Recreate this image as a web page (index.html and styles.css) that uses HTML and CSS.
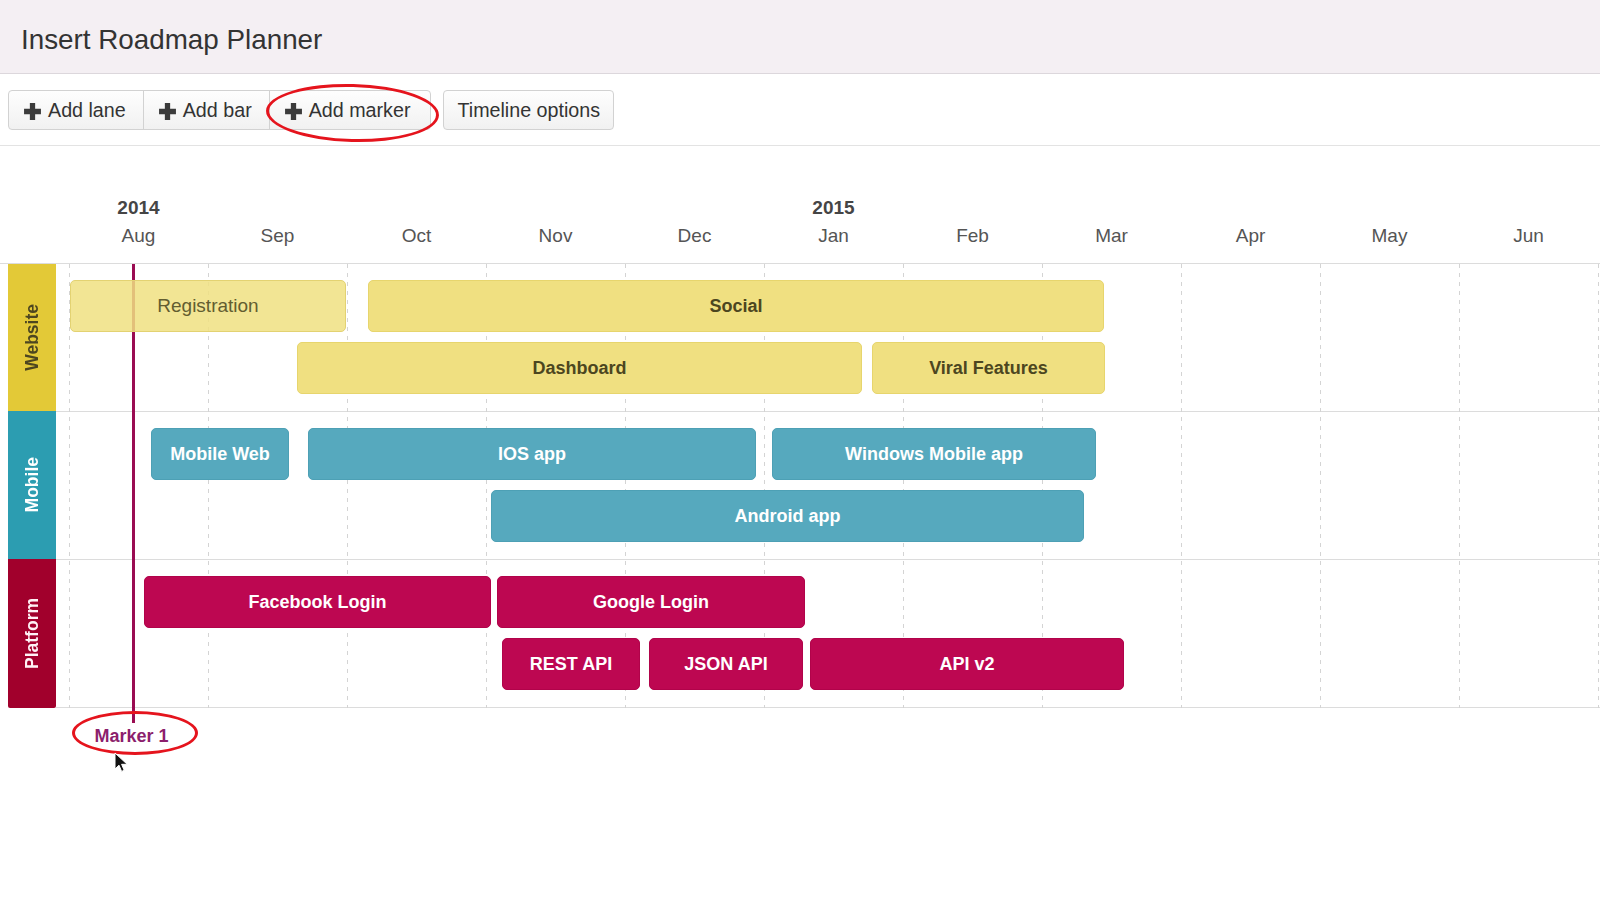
FILE: index.html
```html
<!DOCTYPE html>
<html lang="en">
<head>
<meta charset="utf-8">
<title>Insert Roadmap Planner</title>
<link rel="stylesheet" href="styles.css">
</head>
<body>
<header class="app-header">
  <h1 class="title">Insert Roadmap Planner</h1>
</header>

<div class="toolbar">
  <div class="btn-group">
    <button class="btn"><svg class="plus" viewBox="0 0 18 18"><path d="M6.5 1h5v5.5H17v5h-5.5V17h-5v-5.5H1v-5h5.5z"/></svg>Add lane</button>
    <button class="btn"><svg class="plus" viewBox="0 0 18 18"><path d="M6.5 1h5v5.5H17v5h-5.5V17h-5v-5.5H1v-5h5.5z"/></svg>Add bar</button>
    <button class="btn"><svg class="plus" viewBox="0 0 18 18"><path d="M6.5 1h5v5.5H17v5h-5.5V17h-5v-5.5H1v-5h5.5z"/></svg>Add marker</button>
  </div>
  <button class="btn btn-single">Timeline options</button>
  <span class="annot annot-button"></span>
</div>

<section class="timeline">
  <div class="scale">
    <div class="col"><div class="year">2014</div><div class="month">Aug</div></div>
    <div class="col"><div class="year"></div><div class="month">Sep</div></div>
    <div class="col"><div class="year"></div><div class="month">Oct</div></div>
    <div class="col"><div class="year"></div><div class="month">Nov</div></div>
    <div class="col"><div class="year"></div><div class="month">Dec</div></div>
    <div class="col"><div class="year">2015</div><div class="month">Jan</div></div>
    <div class="col"><div class="year"></div><div class="month">Feb</div></div>
    <div class="col"><div class="year"></div><div class="month">Mar</div></div>
    <div class="col"><div class="year"></div><div class="month">Apr</div></div>
    <div class="col"><div class="year"></div><div class="month">May</div></div>
    <div class="col"><div class="year"></div><div class="month">Jun</div></div>
  </div>

  <div class="lanes">
    <div class="gridlines"></div>

    <div class="marker">
      <div class="marker-label">Marker 1</div>
      <span class="annot annot-marker"></span>
      <svg class="cursor" viewBox="0 0 14 21"><path d="M1 1v16l4-3.8 2.6 6.2 2.6-1.1-2.6-6h5.6z"/></svg>
    </div>

    <div class="lane">
      <div class="lane-label lane-label-website"><span>Website</span></div>
      <div class="lane-body">
        <div class="bar-row">
          <div class="bar bar-yellow bar-faded" style="left:14px;width:276px">Registration</div>
          <div class="bar bar-yellow" style="left:312px;width:736px">Social</div>
        </div>
        <div class="bar-row">
          <div class="bar bar-yellow" style="left:241px;width:565px">Dashboard</div>
          <div class="bar bar-yellow" style="left:816px;width:233px">Viral Features</div>
        </div>
      </div>
    </div>

    <div class="lane">
      <div class="lane-label lane-label-mobile"><span>Mobile</span></div>
      <div class="lane-body">
        <div class="bar-row">
          <div class="bar bar-teal" style="left:95px;width:138px">Mobile Web</div>
          <div class="bar bar-teal" style="left:252px;width:448px">IOS app</div>
          <div class="bar bar-teal" style="left:716px;width:324px">Windows Mobile app</div>
        </div>
        <div class="bar-row">
          <div class="bar bar-teal" style="left:435px;width:593px">Android app</div>
        </div>
      </div>
    </div>

    <div class="lane">
      <div class="lane-label lane-label-platform"><span>Platform</span></div>
      <div class="lane-body">
        <div class="bar-row">
          <div class="bar bar-crimson" style="left:88px;width:347px">Facebook Login</div>
          <div class="bar bar-crimson" style="left:441px;width:308px">Google Login</div>
        </div>
        <div class="bar-row">
          <div class="bar bar-crimson" style="left:446px;width:138px">REST API</div>
          <div class="bar bar-crimson" style="left:593px;width:154px">JSON API</div>
          <div class="bar bar-crimson" style="left:754px;width:314px">API v2</div>
        </div>
      </div>
    </div>
  </div>
</section>
</body>
</html>
```

FILE: styles.css
```css
* {
  box-sizing: border-box;
}

html, body {
  margin: 0;
  padding: 0;
  background: #ffffff;
}

body {
  width: 1600px;
  height: 900px;
  overflow: hidden;
  font-family: "Liberation Sans", Arial, Helvetica, sans-serif;
  color: #333333;
}

/* Header */
.app-header {
  height: 74px;
  padding: 25px 20px 0 21px;
  background: #f4eff3;
  border-bottom: 1px solid #dcd7dc;
}

.title {
  margin: 0;
  font-size: 27.8px;
  line-height: 30px;
  font-weight: normal;
  color: #333333;
}

/* Toolbar */
.toolbar {
  position: relative;
  display: flex;
  align-items: center;
  height: 72px;
  padding: 16px 0 15px 8px;
  border-bottom: 1px solid #e3e3e3;
}

.btn-group {
  display: flex;
}

.btn {
  display: flex;
  align-items: center;
  height: 40px;
  padding: 0 17px 0 14px;
  font-family: inherit;
  font-size: 19.7px;
  color: #333333;
  background: linear-gradient(#fefefe, #f1f1f1);
  border: 1px solid #d2d2d2;
  border-radius: 0;
  cursor: pointer;
}

.btn-group .btn + .btn {
  margin-left: -1px;
}

.btn-group .btn:first-child {
  border-radius: 4px 0 0 4px;
}

.btn-group .btn:last-child {
  border-radius: 0 4px 4px 0;
  padding-right: 20px;
}

.btn-single {
  margin-left: 12px;
  padding: 0 13px;
  border-radius: 4px;
}

.plus {
  width: 19px;
  height: 19px;
  margin-right: 6px;
  margin-top: 3px;
  fill: #3b3b3b;
}

/* Annotations */
.annot {
  position: absolute;
  border: 3px solid #e5141d;
  border-radius: 50%;
  pointer-events: none;
}

.annot-button {
  left: 266px;
  top: 10px;
  width: 173px;
  height: 58px;
  transform: rotate(1.5deg);
}

/* Timeline */
.scale {
  display: flex;
  padding: 49px 0 16px 69px;
  border-bottom: 1px solid #dcdcdc;
}

.col {
  width: 139px;
  flex: 0 0 139px;
  text-align: center;
}

.year {
  height: 24px;
  margin-bottom: 4px;
  font-size: 19px;
  line-height: 25px;
  font-weight: bold;
  color: #454545;
}

.month {
  height: 24px;
  font-size: 19px;
  line-height: 25px;
  color: #555555;
}

.lanes {
  position: relative;
  margin-left: 8px;
}

.gridlines {
  position: absolute;
  left: 48px;
  right: 0;
  top: 0;
  bottom: 0;
  background-image: repeating-linear-gradient(to right, #d4d4d4 0, #d4d4d4 1px, transparent 1px, transparent 139px);
  background-position: 13px 0;
  -webkit-mask-image: repeating-linear-gradient(to bottom, #000 0, #000 4px, transparent 4px, transparent 9px);
  mask-image: repeating-linear-gradient(to bottom, #000 0, #000 4px, transparent 4px, transparent 9px);
}

.lane {
  display: flex;
}

.lane-label {
  width: 48px;
  flex: 0 0 48px;
  display: flex;
  align-items: center;
  justify-content: center;
}

.lane-label span {
  writing-mode: vertical-rl;
  transform: rotate(180deg);
  font-size: 17.5px;
  font-weight: bold;
  line-height: 20px;
}

.lane-label-website {
  background: #e3c937;
  color: #4d4620;
}

.lane-label-mobile {
  background: #2c9db1;
  color: #ffffff;
}

.lane-label-platform {
  background: #a1002c;
  color: #fff2f6;
  border-radius: 0 0 2px 2px;
}

.lane-body {
  flex: 1;
  display: flex;
  flex-direction: column;
  gap: 10px;
  padding: 16px 0 17px 0;
}

.lane + .lane .lane-body {
  border-top: 1px solid #dcdcdc;
}

.lane:last-of-type .lane-body {
  border-bottom: 1px solid #dcdcdc;
}

.bar-row {
  position: relative;
  height: 52px;
}

.bar {
  position: absolute;
  top: 0;
  z-index: 2;
  height: 52px;
  display: flex;
  align-items: center;
  justify-content: center;
  border-radius: 5px;
  font-size: 18px;
  font-weight: bold;
  white-space: nowrap;
}

.bar-yellow {
  background: #f0e081;
  border: 1px solid #e7d56d;
  color: #4c4620;
}

.bar-faded {
  background: rgba(240, 224, 129, 0.85);
  border: 1px solid #e3d272;
  color: #625d30;
  font-weight: normal;
  font-size: 19px;
}

.bar-teal {
  background: #56a9be;
  border: 1px solid #4da0b5;
  color: #ffffff;
}

.bar-crimson {
  background: #bd0751;
  border: 1px solid #b1034a;
  color: #ffffff;
}

/* Marker */
.marker {
  position: absolute;
  left: 124px;
  top: 0;
  width: 3px;
  height: calc(100% + 15px);
  background: #9a0c52;
  z-index: 1;
}

.marker-label {
  position: absolute;
  top: calc(100% + 3px);
  left: 50%;
  transform: translateX(calc(-50% - 2px));
  font-size: 18px;
  line-height: 20px;
  font-weight: bold;
  color: #8c1f6d;
  white-space: nowrap;
}

.annot-marker {
  left: -60px;
  top: calc(100% - 12px);
  width: 126px;
  height: 44px;
}

.cursor {
  position: absolute;
  left: -18px;
  top: calc(100% + 29px);
  width: 14px;
  height: 21px;
  fill: #111111;
  stroke: #ffffff;
  stroke-width: 1;
}
```
